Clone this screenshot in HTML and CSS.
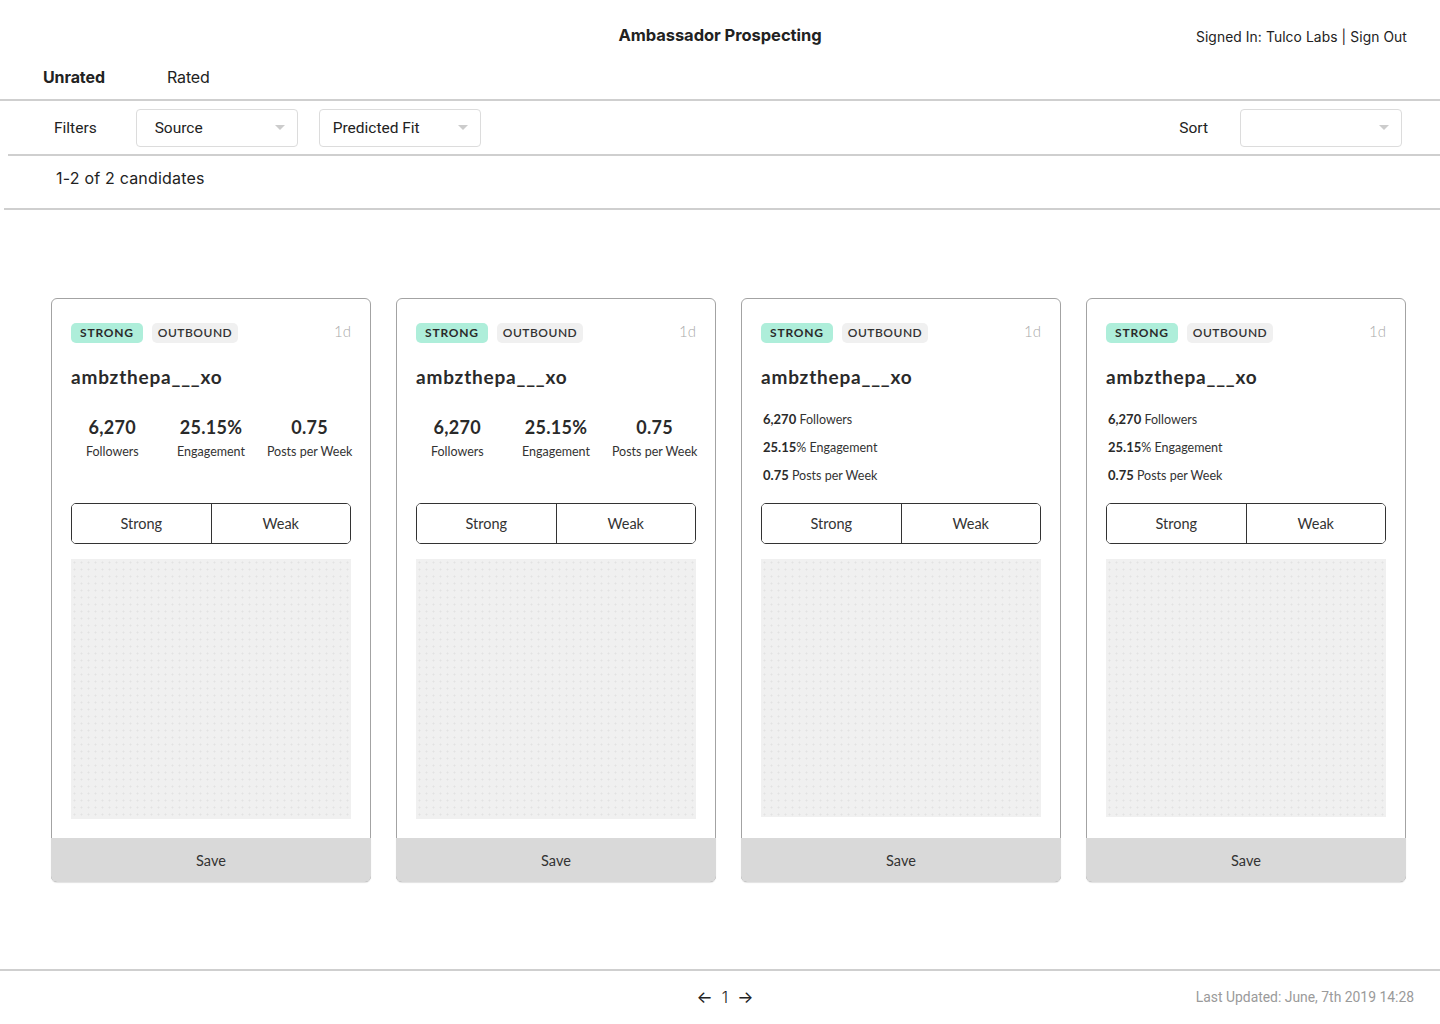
FILE: index.html
```html
<!DOCTYPE html>
<html>
<head>
<meta charset="utf-8">
<title>Ambassador Prospecting</title>
<link rel="stylesheet" href="styles.css">
</head>
<body>
<header class="topbar">
  <div></div>
  <h1 class="title">Ambassador Prospecting</h1>
  <div class="account">Signed In: Tulco Labs | Sign Out</div>
</header>
<nav class="tabs">
  <span class="tab active">Unrated</span>
  <span class="tab">Rated</span>
</nav>
<div class="filters">
  <span class="label">Filters</span>
  <div class="select"><span>Source</span><i class="caret"></i></div>
  <div class="select"><span>Predicted Fit</span><i class="caret"></i></div>
  <div class="spacer"></div>
  <span class="label sort-label">Sort</span>
  <div class="select"><span></span><i class="caret"></i></div>
</div>
<div class="count">1-2 of 2 candidates</div>
<main class="main">
  <div class="cards">
    <article class="card">
      <div class="body">
        <div class="meta"><span class="badge strong">STRONG</span><span class="badge source">OUTBOUND</span><span class="age">1d</span></div>
        <h2 class="name">ambzthepa___xo</h2>
        <div class="stats cols">
          <div class="stat"><b>6,270</b><span>Followers</span></div>
          <div class="stat"><b>25.15%</b><span>Engagement</span></div>
          <div class="stat"><b>0.75</b><span>Posts per Week</span></div>
        </div>
        <div class="rate"><button>Strong</button><button>Weak</button></div>
        <div class="photo"></div>
      </div>
      <button class="save">Save</button>
    </article>
    <article class="card">
      <div class="body">
        <div class="meta"><span class="badge strong">STRONG</span><span class="badge source">OUTBOUND</span><span class="age">1d</span></div>
        <h2 class="name">ambzthepa___xo</h2>
        <div class="stats cols">
          <div class="stat"><b>6,270</b><span>Followers</span></div>
          <div class="stat"><b>25.15%</b><span>Engagement</span></div>
          <div class="stat"><b>0.75</b><span>Posts per Week</span></div>
        </div>
        <div class="rate"><button>Strong</button><button>Weak</button></div>
        <div class="photo"></div>
      </div>
      <button class="save">Save</button>
    </article>
    <article class="card">
      <div class="body">
        <div class="meta"><span class="badge strong">STRONG</span><span class="badge source">OUTBOUND</span><span class="age">1d</span></div>
        <h2 class="name">ambzthepa___xo</h2>
        <div class="stats list">
          <div class="line"><b>6,270</b> Followers</div>
          <div class="line"><b>25.15</b>% Engagement</div>
          <div class="line"><b>0.75</b> Posts per Week</div>
        </div>
        <div class="rate"><button>Strong</button><button>Weak</button></div>
        <div class="photo short"></div>
      </div>
      <button class="save">Save</button>
    </article>
    <article class="card">
      <div class="body">
        <div class="meta"><span class="badge strong">STRONG</span><span class="badge source">OUTBOUND</span><span class="age">1d</span></div>
        <h2 class="name">ambzthepa___xo</h2>
        <div class="stats list">
          <div class="line"><b>6,270</b> Followers</div>
          <div class="line"><b>25.15</b>% Engagement</div>
          <div class="line"><b>0.75</b> Posts per Week</div>
        </div>
        <div class="rate"><button>Strong</button><button>Weak</button></div>
        <div class="photo short"></div>
      </div>
      <button class="save">Save</button>
    </article>
  </div>
</main>
<footer class="footer">
  <div></div>
  <div class="pager"><span class="arrow">&#8592;</span><span class="page">1</span><span class="arrow">&#8594;</span></div>
  <div class="updated">Last Updated: June, 7th 2019 14:28</div>
</footer>
</body>
</html>
```
FILE: styles.css
```css
* { box-sizing: border-box; }
html, body { margin: 0; padding: 0; background: #fff; }
body {
  width: 1440px;
  height: 1024px;
  overflow: hidden;
  font-family: Inter, "Liberation Sans", sans-serif;
  color: #222;
}

.topbar {
  height: 60px;
  display: grid;
  grid-template-columns: 1fr auto 1fr;
  align-items: start;
  padding-top: 24px;
}
.title {
  margin: 0;
  font-size: 16.5px;
  line-height: 22px;
  font-weight: 700;
  color: #222;
  letter-spacing: -0.05px;
}
.account {
  justify-self: end;
  padding-right: 33px;
  padding-top: 4px;
  font-size: 13.8px;
  line-height: 18px;
  color: #222;
  letter-spacing: 0.1px;
}

.tabs {
  height: 41px;
  display: flex;
  align-items: center;
  gap: 62px;
  padding-left: 43px;
  padding-bottom: 5px;
  border-bottom: 2px solid #cfcfcf;
}
.tab { font-size: 16px; color: #222; font-family: Inter, sans-serif; letter-spacing: -0.1px; }
.tab.active { font-weight: 700; }

.filters {
  height: 55px;
  margin-left: 8px;
  display: flex;
  align-items: center;
  padding: 0 38px 0 46px;
  border-bottom: 2px solid #cfcfcf;
  font-family: Roboto, "Liberation Sans", sans-serif;
}
.label { font-size: 15.5px; color: #222; margin-right: 39px; }
.sort-label { margin-right: 32px; }
.select {
  width: 162px;
  height: 38px;
  border: 1px solid #dcdcdc;
  border-radius: 4px;
  display: flex;
  align-items: center;
  justify-content: space-between;
  padding: 0 12px 0 18px;
  margin-right: 21px;
  font-size: 15.5px;
  color: #222;
}
.select:last-child { margin-right: 0; }
.select:nth-of-type(2) { padding-left: 13px; }
.caret {
  width: 0; height: 0;
  border-left: 5px solid transparent;
  border-right: 5px solid transparent;
  border-top: 5px solid #cccccc;
}
.spacer { flex: 1; }

.count {
  height: 54px;
  margin-left: 4px;
  padding-left: 52px;
  display: flex;
  align-items: center;
  padding-bottom: 8px;
  border-bottom: 2px solid #cfcfcf;
  font-size: 16px;
  color: #222;
  letter-spacing: 0.2px;
}

.main {
  height: 761px;
  padding: 88px 0 0 51px;
  border-bottom: 2px solid #cfcfcf;
}
.cards { display: flex; gap: 25px; }

.card {
  width: 320px;
  height: 584px;
  border: 1px solid #a3a3a3;
  border-radius: 6px;
  display: flex;
  flex-direction: column;
  font-family: Lato, "Open Sans", sans-serif;
  position: relative;
}
.body { flex: 1; padding: 24px 19px 0 19px; }
.meta { display: flex; align-items: center; height: 20px; }
.badge {
  height: 20px;
  line-height: 20px;
  font-size: 12px;
  font-weight: 700;
  letter-spacing: 0.8px;
  padding: 0 9px;
  border-radius: 5px;
  margin-right: 9px;
  color: #2a2a2a;
}
.badge.strong { background: #aeeeda; }
.badge.source { background: #f0f0f0; font-weight: 600; padding: 0 6px; color: #333; letter-spacing: 0.5px; }
.age { margin-left: auto; font-size: 15px; color: #aaa; font-weight: 300; margin-top: -5px; }

.name {
  margin: 22px 0 0 0;
  font-size: 19px;
  line-height: 24px;
  font-weight: 700;
  color: #2a2a2a;
  letter-spacing: 0.8px;
}

.stats.cols {
  display: grid;
  grid-template-columns: 1fr 1fr 1fr;
  margin: 27px -8px 43px -8px;
}
.stat { display: flex; flex-direction: column; align-items: center; }
.stat b { font-size: 18px; line-height: 22px; color: #2a2a2a; font-weight: 700; letter-spacing: 0.3px; }
.stat span { font-size: 12.5px; line-height: 16px; margin-top: 6px; color: #333; font-weight: 400; }

.stats.list { margin: 16px 0 14px 0; }
.line { font-size: 12.5px; line-height: 28px; color: #333; height: 28px; padding-left: 2px; }
.line b { font-size: 13px; font-weight: 700; color: #2a2a2a; }

.rate {
  display: flex;
  height: 41px;
  border: 1px solid #333;
  border-radius: 5px;
  overflow: hidden;
}
.rate button {
  flex: 1;
  border: 0;
  background: #fff;
  font-family: Lato, "Open Sans", sans-serif;
  font-size: 14.5px;
  color: #333;
  padding: 0;
}
.rate button + button { border-left: 1px solid #333; }

.photo {
  margin-top: 15px;
  height: 260px;
  background-color: #f0f0f0;
  background-image: radial-gradient(circle, #e2e2e2 0.8px, transparent 1.2px);
  background-size: 7px 7px;
}
.photo.short { height: 258px; }

.save {
  height: 44px;
  margin: 0 -1px -1px -1px;
  border: 0;
  border-radius: 0 0 6px 6px;
  background: #d9d9d9;
  font-family: Lato, "Open Sans", sans-serif;
  font-size: 14.5px;
  color: #333;
  box-shadow: 0 1px 1px rgba(0,0,0,0.12);
}

.footer {
  height: 54px;
  display: grid;
  grid-template-columns: 1fr auto 1fr;
  align-items: center;
  padding-bottom: 2px;
}
.pager {
  display: flex;
  gap: 9px;
  align-items: center;
  font-size: 17px;
  color: #222;
  margin-left: 10px;
}
.pager .arrow { font-size: 17px; }
.pager .page { font-size: 16px; font-weight: 300; }
.updated {
  justify-self: end;
  padding-right: 26px;
  font-size: 13.9px;
  color: #9a9a9a;
  font-family: Roboto, sans-serif;
}
```
